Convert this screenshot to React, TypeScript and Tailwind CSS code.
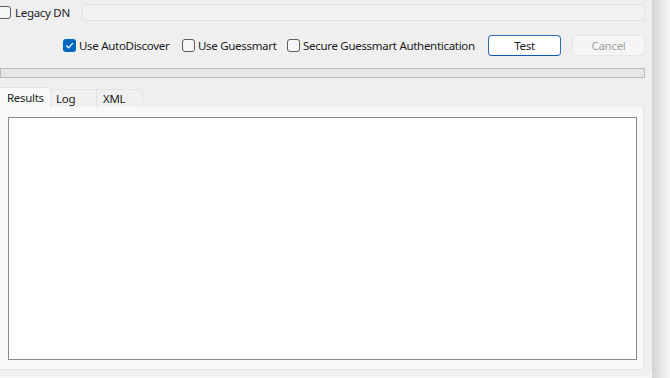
import React from "react";

function Box({ checked = false }: { checked?: boolean }) {
  if (checked) {
    return (
      <span className="block w-[13px] h-[13px] rounded-[3px] bg-[#0067c0] flex items-center justify-center shrink-0">
        <svg width="9" height="9" viewBox="0 0 9 9">
          <path d="M1.5 4.8 L3.6 6.8 L7.6 2.4" fill="none" stroke="#ffffff" strokeWidth="1.2" strokeLinecap="round" strokeLinejoin="round" />
        </svg>
      </span>
    );
  }
  return <span className="block w-[13px] h-[13px] rounded-[3px] border border-[#5c5c5c] bg-[#f6f6f6] shrink-0" />;
}

function Check({ label, checked, w }: { label: string; checked?: boolean; w: string }) {
  return (
    <div className={`flex items-center shrink-0 ${w}`}>
      <Box checked={checked} />
      <span className="ml-[3px] whitespace-nowrap leading-none">{label}</span>
    </div>
  );
}

export default function App() {
  return (
    <div className="w-[670px] h-[378px] flex items-start bg-[#f6f6f6] overflow-hidden font-['Noto_Sans',sans-serif] text-[11.5px] tracking-[-0.3px] text-[#1b1b1b]">
      <div className="w-[652px] h-[376px] shrink-0 bg-[#efefef] rounded-br-[7px] flex flex-col">
        {/* legacy DN row */}
        <div className="flex items-center h-[17px] mt-[4px]">
          <div className="ml-[-2px] shrink-0">
            <Box />
          </div>
          <span className="ml-[4px] leading-none whitespace-nowrap">Legacy DN</span>
          <div className="ml-auto mr-[7px] w-[563px] h-[17px] bg-[#f1f1f1] border border-[#e2e2e2] rounded-[2px]" />
        </div>

        {/* options + buttons */}
        <div className="flex items-center h-[21px] mt-[14px] pl-[63px]">
          {[
            { label: "Use AutoDiscover", checked: true, w: "w-[119px]" },
            { label: "Use Guessmart", checked: false, w: "w-[105px]" },
            { label: "Secure Guessmart Authentication", checked: false, w: "w-[190px]" },
          ].map((c) => (
            <Check key={c.label} label={c.label} checked={c.checked} w={c.w} />
          ))}
          <div className="ml-auto mr-[7px] flex gap-[11px]">
            <button className="w-[73px] h-[21px] rounded-[4px] bg-white border border-[#2f6db5] border-b-[#0a5cb5] text-[#1b1b1b] leading-none">
              Test
            </button>
            <button className="w-[73px] h-[21px] rounded-[4px] bg-[#f5f5f5] border border-[#e6e6e6] text-[#a0a0a0] leading-none">
              Cancel
            </button>
          </div>
        </div>

        {/* progress */}
        <div className="mt-[12px] w-[645px] h-[10px] border border-[#bcbcbc] bg-[#e6e6e6]" />

        {/* tabs */}
        <div className="mt-[9px] flex items-end h-[20px]">
          <div className="w-[51px] h-[20px] bg-[#f9f9f9] border-t border-r border-[#e3e3e3] pl-[7px] flex items-center whitespace-nowrap">
            Results
          </div>
          <div className="w-[46px] h-[18px] bg-[#f0f0f0] border-t border-r border-[#e3e3e3] pl-[5px] flex items-center">
            Log
          </div>
          <div className="w-[46px] h-[18px] bg-[#f0f0f0] border-t border-r border-[#e3e3e3] pl-[6px] flex items-center">
            XML
          </div>
        </div>
        <div className="w-[644px] h-[263px] bg-[#f9f9f9] border-r border-b border-[#e3e3e3] pl-[8px] pt-[10px] pr-[6px] pb-[9px]">
          <div className="w-full h-full bg-white border border-[#868a91]" />
        </div>
      </div>
      <div className="flex-1 h-[378px] bg-gradient-to-r from-[#d4d4d4] to-[#f6f6f6]" />
    </div>
  );
}
